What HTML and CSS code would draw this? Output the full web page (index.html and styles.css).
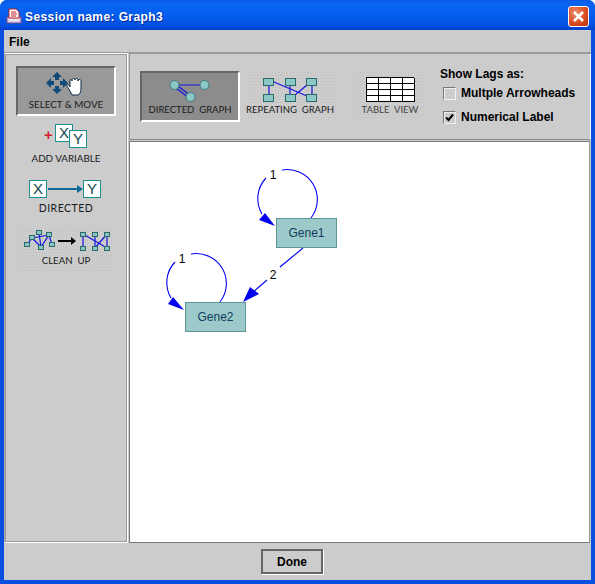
FILE: index.html
```html
<!DOCTYPE html>
<html lang="en">
<head>
    <meta charset="UTF-8">
    <title>Session name: Graph3</title>
    <link rel="stylesheet" href="styles.css">
</head>
<body>
<div class="window">
    <div class="titlebar">
        <svg class="app-icon" width="16" height="16" viewBox="0 0 16 16">
            <rect x="1" y="9" width="14" height="6" fill="#d8c8e8" stroke="#70508a"/>
            <path d="M3 1h7l3 3v6H3z" fill="#fff" stroke="#c02020"/>
            <path d="M5 4h5M5 6h6M5 8h5" stroke="#c02020"/>
            <path d="M3 12h10" stroke="#fff"/>
        </svg>
        <span class="title-text">Session name: Graph3</span>
        <div class="close-btn">
            <svg width="21" height="21" viewBox="0 0 21 21">
                <path d="M6 6l9 9M15 6l-9 9" stroke="#fff" stroke-width="2.6"/>
            </svg>
        </div>
    </div>
    <div class="content">
        <div class="menubar"><span class="menu-item">File</span></div>
        <div class="main">
            <div class="side-panel">
                <div class="tool tool-selected">
                    <svg width="60" height="27" viewBox="0 0 60 27">
                        <g fill="#0f4a78">
                            <path d="M21 1l5 5h-3v3h-4v-3h-3z"/>
                            <path d="M21 23l-5-5h3v-3h4v3h3z"/>
                            <path d="M10 12l5-5v3h3v4h-3v3z"/>
                            <path d="M32 12l-5-5v3h-3v4h3v3z"/>
                        </g>
                        <path d="M34 20l-3-5c-1-2 1-2 2-1l1 2v-6c0-2 2-2 2 0v-1c0-2 3-2 3 0v0c0-2 3-2 3 0v1c0-2 3-2 3 0v7c0 4-1 6-3 7h-6z" fill="#fff" stroke="#0f2a48"/>
                    </svg>
                    <span class="tool-label">SELECT &amp; MOVE</span>
                </div>
                <div class="tool tool-add">
                    <div class="add-icon">
                        <span class="plus">+</span>
                        <span class="var-box var-x">X</span>
                        <span class="var-box var-y">Y</span>
                    </div>
                    <span class="tool-label">ADD VARIABLE</span>
                </div>
                <div class="tool tool-directed">
                    <div class="directed-icon">
                        <span class="var-box">X</span>
                        <svg width="36" height="18" viewBox="0 0 36 18">
                            <path d="M1 9h31" stroke="#0f6a96" stroke-width="2"/>
                            <path d="M30 5l6 4-6 4z" fill="#0f6a96"/>
                        </svg>
                        <span class="var-box">Y</span>
                    </div>
                    <span class="tool-label">DIRECTED</span>
                </div>
                <div class="tool tool-clean">
                    <svg width="84" height="22" viewBox="0 0 84 22">
                        <g stroke="#1414e0" stroke-width="1.2" fill="none">
                            <path d="M1 15L6 8L15 17L23 5L26 15M13 3L15 17M6 8L23 5"/>
                            <path d="M57 4V18M57 4L81 18M69 4V18M81 4V18M81 4L69 18"/>
                        </g>
                        <g fill="#8cc4c4" stroke="#2a6a6a">
                            <rect x="-1.500" y="12.500" width="5" height="4"/>
                            <rect x="3.500" y="5.500" width="5" height="4"/>
                            <rect x="10.500" y="0.500" width="5" height="4"/>
                            <rect x="12.500" y="15.500" width="5" height="4"/>
                            <rect x="20.500" y="2.500" width="5" height="4"/>
                            <rect x="23.500" y="12.500" width="5" height="4"/>
                            <rect x="54.500" y="2.500" width="5" height="4"/>
                            <rect x="54.500" y="16.500" width="5" height="4"/>
                            <rect x="66.500" y="2.500" width="5" height="4"/>
                            <rect x="66.500" y="16.500" width="5" height="4"/>
                            <rect x="78.500" y="2.500" width="5" height="4"/>
                            <rect x="78.500" y="16.500" width="5" height="4"/>
                        </g>
                        <path d="M32 11h14" stroke="#000" stroke-width="2"/>
                        <path d="M45 7l5 4-5 4z" fill="#000"/>
                    </svg>
                    <span class="tool-label">CLEAN&nbsp; UP</span>
                </div>
            </div>
            <div class="right-col">
                <div class="toolbar">
                    <div class="view-btn view-selected">
                        <svg width="44" height="27" viewBox="0 0 44 27">
                            <g stroke="#1414e0" stroke-width="1.2">
                                <path d="M6 8H36"/>
                                <path d="M7 7L23 19M5 9L21 21"/>
                            </g>
                            <g fill="#8cc8c8" stroke="#3a7a7a">
                                <circle cx="6.500" cy="8" r="4.500"/>
                                <circle cx="36.500" cy="8" r="4.500"/>
                                <circle cx="22.500" cy="20" r="4.500"/>
                            </g>
                        </svg>
                        <span class="tool-label">DIRECTED&nbsp; GRAPH</span>
                    </div>
                    <div class="view-btn view-repeat">
                        <svg width="54" height="24" viewBox="0 0 54 24">
                            <g stroke="#1414e0" stroke-width="1.2">
                                <path d="M6 7V17M27 7V17M49 7V17M11 4L44 18M32 17L44 7"/>
                            </g>
                            <g fill="#8cc8c8" stroke="#2a6a6a">
                                <rect x="0.500" y="0.500" width="10" height="7"/>
                                <rect x="0.500" y="16.500" width="10" height="7"/>
                                <rect x="22.500" y="0.500" width="10" height="7"/>
                                <rect x="22.500" y="16.500" width="10" height="7"/>
                                <rect x="43.500" y="0.500" width="10" height="7"/>
                                <rect x="43.500" y="16.500" width="10" height="7"/>
                            </g>
                        </svg>
                        <span class="tool-label">REPEATING&nbsp; GRAPH</span>
                    </div>
                    <div class="view-btn view-table">
                        <div class="mini-table">
                            <i></i><i></i><i></i><i></i>
                            <i></i><i></i><i></i><i></i>
                            <i></i><i></i><i></i><i></i>
                            <i></i><i></i><i></i><i></i>
                        </div>
                        <span class="tool-label">TABLE&nbsp; VIEW</span>
                    </div>
                    <div class="lags">
                        <div class="lags-title">Show Lags as:</div>
                        <div class="lag-row"><span class="check"></span>Multple Arrowheads</div>
                        <div class="lag-row"><span class="check">
                            <svg width="9" height="9" viewBox="0 0 9 9"><path d="M1 4.500l2.500 2.500L8 1.500" fill="none" stroke="#000" stroke-width="2"/></svg>
                        </span>Numerical Label</div>
                    </div>
                </div>
                <div class="canvas">
                    <svg class="graph" width="460" height="401" viewBox="130 142 460 401">
                        <g fill="none" stroke="#0000f0" stroke-width="1.100">
                            <path d="M311 218A30 30 0 0 0 282 170"/>
                            <path d="M266 178A30 30 0 0 0 262 214"/>
                            <path d="M220 302A30 30 0 0 0 191 254"/>
                            <path d="M175 262A30 30 0 0 0 171 298"/>
                            <path d="M303 248L280 267"/>
                            <path d="M267 280L252 293"/>
                        </g>
                        <g fill="#0000f0">
                            <path d="M275 226L259 220L265 213z"/>
                            <path d="M184 310L168 304L173 297z"/>
                            <path d="M243 302L250 287L259 294z"/>
                        </g>
                        <g class="node">
                            <rect x="276.500" y="218.500" width="60" height="29"/>
                            <text x="306.500" y="237">Gene1</text>
                        </g>
                        <g class="node">
                            <rect x="185.500" y="302.500" width="60" height="29"/>
                            <text x="215.500" y="321">Gene2</text>
                        </g>
                        <text class="lag" x="273" y="179">1</text>
                        <text class="lag" x="182" y="263">1</text>
                        <text class="lag" x="273" y="279">2</text>
                    </svg>
                </div>
            </div>
        </div>
        <div class="footer"><button class="done-btn">Done</button></div>
    </div>
</div>
</body>
</html>
```

FILE: styles.css
```css
* {
    box-sizing: border-box;
}
html, body {
    margin: 0;
    padding: 0;
}
body {
    font-family: "Liberation Sans", Arial, sans-serif;
    background: #fff;
}
.window {
    width: 595px;
    height: 584px;
    display: flex;
    flex-direction: column;
    background: #0a50e0;
    border-radius: 7px 7px 0 0;
    overflow: hidden;
}
.titlebar {
    height: 30px;
    flex: none;
    display: flex;
    align-items: center;
    padding: 2px 6px 0 6px;
    background: linear-gradient(#0a5ae6 0, #0a64f0 12%, #0560f2 40%, #0450e0 85%, #0340cc 100%);
}
.app-icon {
    flex: none;
    margin-right: 3px;
}
.title-text {
    flex: 1;
    margin-top: 2px;
    color: #fff;
    font-size: 12px;
    letter-spacing: 0.4px;
    font-weight: bold;
    text-shadow: 1px 1px 0 #0a2a90;
}
.close-btn {
    width: 21px;
    height: 21px;
    border: 1px solid #fff;
    border-radius: 3px;
    background: radial-gradient(circle at 35% 30%, #ec8a6a, #d84a20 60%, #b83010);
}
.close-btn svg {
    display: block;
    margin: -1px;
}
.content {
    flex: 1;
    display: flex;
    flex-direction: column;
    min-height: 0;
    margin: 0 4px 4px;
    background: #ccc;
}
.menubar {
    height: 23px;
    flex: none;
    padding: 5px 0 0 5px;
    font-size: 12px;
    font-weight: bold;
    color: #000;
    border-bottom: 1px solid #999;
}
.main {
    flex: 1;
    display: flex;
    min-height: 0;
}
.side-panel {
    width: 124px;
    flex: none;
    display: flex;
    flex-direction: column;
    align-items: center;
    padding-top: 12px;
    border: 1px solid #fff;
    border-left-color: #aaa;
    border-top-color: #fff;
    outline: 1px solid #999;
    outline-offset: -2px;
}
.tool {
    display: flex;
    flex-direction: column;
    align-items: center;
}
.tool-label {
    font-family: Lato, "Liberation Sans", sans-serif;
    font-size: 9.800px;
    color: #1a1a1a;
    white-space: nowrap;
    line-height: 12px;
}
.tool-selected {
    width: 100px;
    height: 50px;
    padding-top: 3px;
    background: #999;
    border: 2px solid #fff;
    border-top-color: #666;
    border-left-color: #666;
}
.tool-add {
    margin-top: 8px;
}
.add-icon {
    position: relative;
    width: 50px;
    height: 26px;
    margin-bottom: 2px;
}
.plus {
    position: absolute;
    left: 3px;
    top: 2px;
    font-size: 15px;
    line-height: 18px;
    font-weight: bold;
    color: #d02030;
}
.var-box {
    display: block;
    width: 18px;
    height: 18px;
    flex: none;
    background: #fff;
    border: 1px solid #1f8f8f;
    font-size: 15px;
    line-height: 16px;
    text-align: center;
    color: #0f4a50;
}
.var-x {
    position: absolute;
    left: 14px;
    top: 0;
}
.var-y {
    position: absolute;
    left: 28px;
    top: 6px;
}
.tool-directed {
    margin-top: 16px;
}
.directed-icon {
    display: flex;
    align-items: center;
    margin-bottom: 4px;
    margin-right: 2px;
}
.tool-directed .tool-label {
    font-size: 10.500px;
    letter-spacing: 0.5px;
}
.tool-clean {
    width: 98px;
    margin-top: 13px;
    padding-top: 3px;
    background-image: radial-gradient(#c2c2c2 0.5px, transparent 1px);
    background-size: 3px 3px;
}
.tool-clean svg {
    margin-left: 3px;
    margin-bottom: 3px;
    overflow: visible;
}
.tool-clean .tool-label {
    font-size: 9.600px;
    margin-bottom: 5px;
}
.right-col {
    flex: 1;
    display: flex;
    flex-direction: column;
    min-width: 0;
    margin-left: 1px;
}
.toolbar {
    height: 87px;
    flex: none;
    display: flex;
    padding: 17px 0 0 10px;
    border: 1px solid #999;
    border-right-color: #fff;
    border-bottom-color: #888;
}
.view-btn {
    display: flex;
    flex-direction: column;
    align-items: center;
    height: 51px;
}
.view-btn .tool-label {
    font-size: 9.500px;
}
.view-selected {
    width: 100px;
    padding-top: 4px;
    background: #8c8c8c;
    border: 2px solid #fff;
    border-top-color: #666;
    border-left-color: #666;
}
.view-repeat {
    width: 92px;
    margin-left: 4px;
    padding-top: 7px;
    background-image: radial-gradient(#c2c2c2 0.5px, transparent 1px);
    background-size: 3px 3px;
}
.view-repeat svg {
    margin-bottom: 2px;
}
.view-table {
    width: 74px;
    margin-left: 17px;
    padding-top: 6px;
    background-image: radial-gradient(#c2c2c2 0.5px, transparent 1px);
    background-size: 3px 3px;
}
.view-table .tool-label {
    color: #444;
}
.mini-table {
    display: grid;
    grid-template-columns: repeat(4, 12px);
    grid-auto-rows: 6px;
    width: 48px;
    height: 25px;
    margin-bottom: 2px;
    background: #fff;
    border-top: 1px solid #000;
    border-left: 1px solid #000;
}
.mini-table i {
    border-right: 1px solid #000;
    border-bottom: 1px solid #000;
}
.lags {
    margin-left: 13px;
    margin-top: -4px;
    font-size: 12px;
    font-weight: bold;
    color: #000;
    white-space: nowrap;
}
.lags-title {
    line-height: 14px;
}
.lag-row {
    display: flex;
    align-items: center;
    height: 24px;
    margin-left: 3px;
}
.check {
    width: 13px;
    height: 13px;
    margin-right: 5px;
    display: flex;
    align-items: center;
    justify-content: center;
    background: #ccc;
    border: 1px solid #777;
    border-right-color: #eee;
    border-bottom-color: #eee;
    box-shadow: inset 1px 1px 0 #eee;
}
.canvas {
    flex: 1;
    min-height: 0;
    margin: 1px 1px 0 0;
    background: #fff;
    border: 1px solid #777;
    border-right-color: #999;
}
.graph {
    display: block;
}
.node rect {
    fill: #9ccaca;
    stroke: #5d9494;
}
.node text {
    fill: #123c60;
    font-size: 12px;
    text-anchor: middle;
    font-family: "Liberation Sans", Arial, sans-serif;
}
.lag {
    font-size: 12px;
    fill: #000;
    text-anchor: middle;
    font-family: "Liberation Sans", Arial, sans-serif;
}
.footer {
    height: 37px;
    flex: none;
    display: flex;
    justify-content: center;
    padding: 6px 11px 0 0;
}
.done-btn {
    width: 62px;
    height: 25px;
    font-family: "Liberation Sans", Arial, sans-serif;
    font-size: 12px;
    font-weight: bold;
    color: #000;
    background: #ccc;
    border: 2px solid #666;
    box-shadow: 1px 1px 0 #fff;
    padding: 0;
}
```
